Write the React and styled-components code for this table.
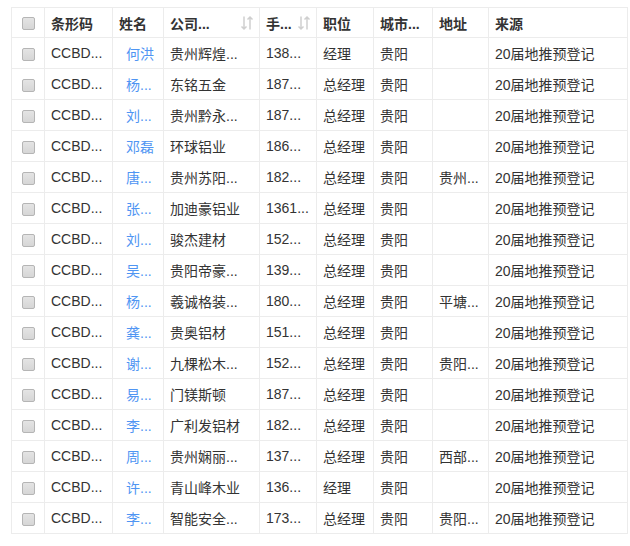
import React from "react";
import styled, { createGlobalStyle } from "styled-components";

const GlobalStyle = createGlobalStyle`
  body {
    margin: 0;
    background: #fff;
    font-family: "Liberation Sans", "Noto Sans CJK SC", sans-serif;
    color: #333;
  }
`;

const columns = [
  { key: "check", width: 33 },
  { key: "code", title: "条形码", width: 68 },
  { key: "name", title: "姓名", width: 51 },
  { key: "company", title: "公司...", width: 96, sortable: true },
  { key: "phone", title: "手...", width: 57, sortable: true },
  { key: "role", title: "职位", width: 57 },
  { key: "city", title: "城市...", width: 59 },
  { key: "addr", title: "地址", width: 56 },
  { key: "source", title: "来源", width: 139 },
];

// 名字, 公司, 手机, 职位, 地址
const rows = [
  ["何洪", "贵州辉煌...", "138...", "经理", ""],
  ["杨...", "东铭五金", "187...", "总经理", ""],
  ["刘...", "贵州黔永...", "187...", "总经理", ""],
  ["邓磊", "环球铝业", "186...", "总经理", ""],
  ["唐...", "贵州苏阳...", "182...", "总经理", "贵州..."],
  ["张...", "加迪豪铝业", "1361...", "总经理", ""],
  ["刘...", "骏杰建材", "152...", "总经理", ""],
  ["吴...", "贵阳帝豪...", "139...", "总经理", ""],
  ["杨...", "羲诚格装...", "180...", "总经理", "平塘..."],
  ["龚...", "贵奥铝材", "151...", "总经理", ""],
  ["谢...", "九棵松木...", "152...", "总经理", "贵阳..."],
  ["易...", "门镁斯顿", "187...", "总经理", ""],
  ["李...", "广利发铝材", "182...", "总经理", ""],
  ["周...", "贵州娴丽...", "137...", "总经理", "西部..."],
  ["许...", "青山峰木业", "136...", "经理", ""],
  ["李...", "智能安全...", "173...", "总经理", "贵阳..."],
];

const SortIcon = () => (
  <SortMark viewBox="0 0 14 16" width="14" height="16">
    <path d="M4 1.5v12.5M1.5 11.5L4 14l2.5-2.5" stroke="#cfcfcf" strokeWidth="1.5" fill="none" />
    <path d="M10 14.5V2M7.5 4.5L10 2l2.5 2.5" stroke="#cfcfcf" strokeWidth="1.5" fill="none" />
  </SortMark>
);

const App = () => (
  <>
    <GlobalStyle />
    <Page>
      <Table>
        <colgroup>
          {columns.map((c) => (
            <col key={c.key} style={{ width: c.width }} />
          ))}
        </colgroup>
        <thead>
          <tr>
            {columns.map((c) =>
              c.key === "check" ? (
                <Th key={c.key} $center>
                  <Check />
                </Th>
              ) : (
                <Th key={c.key}>
                  <HeadInner>
                    <span>{c.title}</span>
                    {c.sortable && <SortIcon />}
                  </HeadInner>
                </Th>
              )
            )}
          </tr>
        </thead>
        <tbody>
          {rows.map(([name, company, phone, role, addr], i) => (
            <tr key={i}>
              <Td $center>
                <Check />
              </Td>
              <Td>CCBD...</Td>
              <Td>
                <NameLink>{name}</NameLink>
              </Td>
              <Td>{company}</Td>
              <Td>{phone}</Td>
              <Td>{role}</Td>
              <Td>贵阳</Td>
              <Td>{addr}</Td>
              <Td>20届地推预登记</Td>
            </tr>
          ))}
        </tbody>
      </Table>
    </Page>
  </>
);

export default App;

const Page = styled.div`
  padding: 7px 0 0 11px;
`;

const Table = styled.table`
  width: 617px;
  table-layout: fixed;
  border-collapse: collapse;
  font-size: 14px;
  border: 1px solid #ececec;
`;

const Th = styled.th`
  height: 29px;
  padding: 0 6px;
  text-align: ${(p) => (p.$center ? "center" : "left")};
  font-weight: bold;
  color: #333;
  border: 1px solid #ececec;
  white-space: nowrap;
  overflow: hidden;
`;

const HeadInner = styled.div`
  display: flex;
  align-items: center;
  justify-content: space-between;
`;

const SortMark = styled.svg`
  flex-shrink: 0;
  margin-right: -1px;
`;

const Td = styled.td`
  height: 30px;
  padding: 0 6px;
  text-align: ${(p) => (p.$center ? "center" : "left")};
  color: #333;
  border: 1px solid #ececec;
  white-space: nowrap;
  overflow: hidden;
`;

const NameLink = styled.a`
  display: inline-block;
  margin-left: 7px;
  color: #4f95f3;
  cursor: pointer;
`;

const Check = styled.span`
  display: inline-block;
  width: 11px;
  height: 11px;
  vertical-align: middle;
  border: 1px solid #b5b5b5;
  border-radius: 2px;
  background: linear-gradient(#e4e4e4, #d6d6d6);
`;
